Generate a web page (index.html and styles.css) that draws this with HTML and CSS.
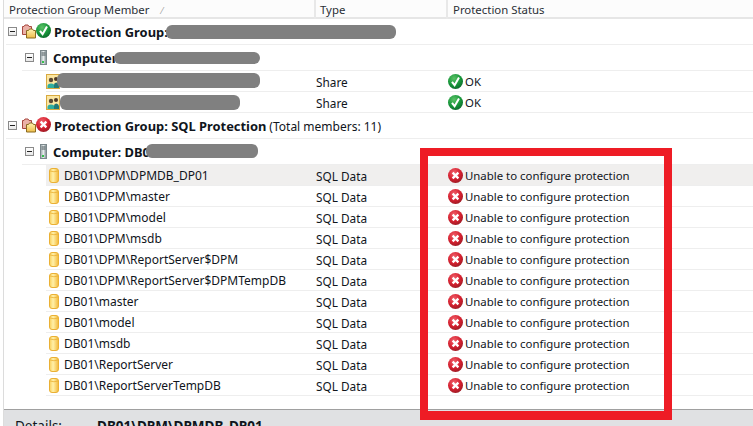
FILE: index.html
```html
<!DOCTYPE html>
<html lang="en">
<head>
<meta charset="utf-8">
<title>Protection Group Members</title>
<link rel="stylesheet" href="styles.css">
</head>
<body>
<svg class="defs" width="0" height="0" aria-hidden="true">
  <defs>
    <radialGradient id="gOk" cx="40%" cy="30%" r="80%"><stop offset="0" stop-color="#5cc267"/><stop offset=".55" stop-color="#17963a"/><stop offset="1" stop-color="#0a5f2a"/></radialGradient>
    <radialGradient id="gErr" cx="40%" cy="30%" r="80%"><stop offset="0" stop-color="#f0606a"/><stop offset=".55" stop-color="#d5202f"/><stop offset="1" stop-color="#8e1a22"/></radialGradient>
    <linearGradient id="gDb" x1="0" x2="1" y1="0" y2="0"><stop offset="0" stop-color="#f9cf5a"/><stop offset=".4" stop-color="#fff0a8"/><stop offset="1" stop-color="#f3b838"/></linearGradient>
    <linearGradient id="gSrv" x1="0" x2="1" y1="0" y2="0"><stop offset="0" stop-color="#9aa6aa"/><stop offset=".5" stop-color="#e6ebec"/><stop offset="1" stop-color="#76858a"/></linearGradient>
    <linearGradient id="gFold" x1="0" x2="0" y1="0" y2="1"><stop offset="0" stop-color="#fff3b4"/><stop offset="1" stop-color="#eebc48"/></linearGradient>
    <symbol id="ok" viewBox="0 0 15 15"><circle cx="7.5" cy="7.5" r="7.5" fill="url(#gOk)"/><path d="M4 7.800 6.600 11.200 11 3.400" fill="none" stroke="#fff" stroke-width="2"/></symbol>
    <symbol id="err" viewBox="0 0 15 15"><circle cx="7.5" cy="7.5" r="7.5" fill="url(#gErr)"/><path d="M4.600 4.600l5.800 5.800M10.400 4.600l-5.800 5.800" fill="none" stroke="#fff" stroke-width="2.300"/></symbol>
    <symbol id="group" viewBox="0 0 14 15"><path d="M.5 2.500h1.500l1-1.500h3l1 1.500h2.500v8h-9z" fill="#eab1a8" stroke="#a8473f"/><path d="M4.500 6.500h2l1-1.500h3l1 1.500h2v7.500h-9z" fill="url(#gFold)" stroke="#8a6a20"/></symbol>
    <symbol id="server" viewBox="0 0 7 15"><rect x=".5" y=".5" width="6" height="14" fill="url(#gSrv)" stroke="#7c888c"/><path d="M1.500 3h4M1.500 5h4" stroke="#4f5b5f"/><rect x="2" y="11" width="2" height="2" fill="#35c04b"/></symbol>
    <symbol id="share" viewBox="0 0 14 15"><rect x=".5" y=".5" width="13" height="14" fill="#fbe6a2" stroke="#d8a93f"/><circle cx="5" cy="6" r="2.200" fill="#5b4a35"/><circle cx="10" cy="5" r="2" fill="#4f3a25"/><path d="M1.500 14v-2q0-2.500 3.500-2.500t3.500 2.500v2z" fill="#2fae9f"/><path d="M8 14v-3q0-2.500 2.200-2.500t2.800 2.500v3z" fill="#227a78"/></symbol>
    <symbol id="db" viewBox="0 0 10 15"><rect x=".5" y=".5" width="9" height="14" rx="2.500" fill="url(#gDb)" stroke="#eab034"/><path d="M1 3q4 1.500 8 0" fill="none" stroke="#eab034" stroke-width=".8"/></symbol>
  </defs>
</svg>

<main class="window">
  <header class="head">
    <div class="head-cell head-member">Protection Group Member<span class="sort">&#8260;</span></div>
    <div class="head-cell head-type">Type</div>
    <div class="head-cell head-status">Protection Status</div>
  </header>

  <section class="tree">
    <div class="row group">
      <span class="expander"></span>
      <svg class="ico-group"><use href="#group"/></svg>
      <svg class="ico-state"><use href="#ok"/></svg>
      <span class="label"><b>Protection Group:</b></span>
      <span class="smudge s1"></span>
    </div>
    <div class="row computer">
      <span class="expander"></span>
      <svg class="ico-server"><use href="#server"/></svg>
      <span class="label"><b>Computer</b></span>
      <span class="smudge s2"></span>
    </div>
    <div class="row member">
      <div class="cell-name"><svg class="ico-share"><use href="#share"/></svg></div>
      <div class="cell-type">Share</div>
      <div class="cell-status"><svg class="ico-small"><use href="#ok"/></svg>OK</div>
      <span class="smudge s3"></span>
    </div>
    <div class="row member">
      <div class="cell-name"><svg class="ico-share"><use href="#share"/></svg></div>
      <div class="cell-type">Share</div>
      <div class="cell-status"><svg class="ico-small"><use href="#ok"/></svg>OK</div>
      <span class="smudge s4"></span>
    </div>

    <div class="row group">
      <span class="expander"></span>
      <svg class="ico-group"><use href="#group"/></svg>
      <svg class="ico-state"><use href="#err"/></svg>
      <span class="label"><b>Protection Group: SQL Protection</b> <span class="count">(Total members: 11)</span></span>
    </div>
    <div class="row computer">
      <span class="expander"></span>
      <svg class="ico-server"><use href="#server"/></svg>
      <span class="label"><b>Computer: DB01</b></span>
      <span class="smudge s5"></span>
    </div>
    <div class="row member selected">
      <div class="cell-name"><svg class="ico-db"><use href="#db"/></svg>DB01\DPM\DPMDB_DP01</div>
      <div class="cell-type">SQL Data</div>
      <div class="cell-status"><svg class="ico-small"><use href="#err"/></svg>Unable to configure protection</div>
    </div>
    <div class="row member">
      <div class="cell-name"><svg class="ico-db"><use href="#db"/></svg>DB01\DPM\master</div>
      <div class="cell-type">SQL Data</div>
      <div class="cell-status"><svg class="ico-small"><use href="#err"/></svg>Unable to configure protection</div>
    </div>
    <div class="row member">
      <div class="cell-name"><svg class="ico-db"><use href="#db"/></svg>DB01\DPM\model</div>
      <div class="cell-type">SQL Data</div>
      <div class="cell-status"><svg class="ico-small"><use href="#err"/></svg>Unable to configure protection</div>
    </div>
    <div class="row member">
      <div class="cell-name"><svg class="ico-db"><use href="#db"/></svg>DB01\DPM\msdb</div>
      <div class="cell-type">SQL Data</div>
      <div class="cell-status"><svg class="ico-small"><use href="#err"/></svg>Unable to configure protection</div>
    </div>
    <div class="row member">
      <div class="cell-name"><svg class="ico-db"><use href="#db"/></svg>DB01\DPM\ReportServer$DPM</div>
      <div class="cell-type">SQL Data</div>
      <div class="cell-status"><svg class="ico-small"><use href="#err"/></svg>Unable to configure protection</div>
    </div>
    <div class="row member">
      <div class="cell-name"><svg class="ico-db"><use href="#db"/></svg>DB01\DPM\ReportServer$DPMTempDB</div>
      <div class="cell-type">SQL Data</div>
      <div class="cell-status"><svg class="ico-small"><use href="#err"/></svg>Unable to configure protection</div>
    </div>
    <div class="row member">
      <div class="cell-name"><svg class="ico-db"><use href="#db"/></svg>DB01\master</div>
      <div class="cell-type">SQL Data</div>
      <div class="cell-status"><svg class="ico-small"><use href="#err"/></svg>Unable to configure protection</div>
    </div>
    <div class="row member">
      <div class="cell-name"><svg class="ico-db"><use href="#db"/></svg>DB01\model</div>
      <div class="cell-type">SQL Data</div>
      <div class="cell-status"><svg class="ico-small"><use href="#err"/></svg>Unable to configure protection</div>
    </div>
    <div class="row member">
      <div class="cell-name"><svg class="ico-db"><use href="#db"/></svg>DB01\msdb</div>
      <div class="cell-type">SQL Data</div>
      <div class="cell-status"><svg class="ico-small"><use href="#err"/></svg>Unable to configure protection</div>
    </div>
    <div class="row member">
      <div class="cell-name"><svg class="ico-db"><use href="#db"/></svg>DB01\ReportServer</div>
      <div class="cell-type">SQL Data</div>
      <div class="cell-status"><svg class="ico-small"><use href="#err"/></svg>Unable to configure protection</div>
    </div>
    <div class="row member">
      <div class="cell-name"><svg class="ico-db"><use href="#db"/></svg>DB01\ReportServerTempDB</div>
      <div class="cell-type">SQL Data</div>
      <div class="cell-status"><svg class="ico-small"><use href="#err"/></svg>Unable to configure protection</div>
    </div>
  </section>

  <footer class="details">
    <span class="details-key">Details:</span>
    <b class="details-value">DB01\DPM\DPMDB_DP01</b>
  </footer>

  <div class="callout"></div>
</main>
</body>
</html>
```
FILE: styles.css
```css
* { box-sizing: border-box; }
html, body { margin: 0; height: 100%; overflow: hidden; background: #fff; }
.defs { position: absolute; }
.window {
  position: relative;
  height: 426px;
  display: flex;
  flex-direction: column;
  overflow: hidden;
  font: 11.4px/16px "Noto Sans", sans-serif;
  color: #10151c;
  border-left: 3px solid #fff;
}
.window::before {
  content: "";
  position: absolute;
  left: 0; top: 0; bottom: 0;
  width: 1px;
  background: #dcdcdc;
}

.head {
  flex: none;
  height: 19px;
  display: grid;
  grid-template-columns: 311px 132px 1fr;
  background: #fcfcfc;
  border-bottom: 2px solid #e6e6e6;
  color: #2a2f36;
}
.head-cell { padding: 2px 0 0 6px; white-space: nowrap; }
.head-type, .head-status { border-left: 2px solid #e8e8e8; }
.head-type { padding-left: 4px; }
.head-status { padding-left: 5px; }
.sort { margin-left: 12px; color: #9a9a9a; font-size: 9px; }

.tree { flex: none; height: 390px; }
.row { position: relative; display: flex; align-items: center; border-bottom: 1px solid #eeeeee; }
.group { height: 26px; margin-left: 3px; padding-left: 2px; }
.computer { height: 26px; margin-left: 19px; }
.group b, .computer b { font-size: 12.9px; }
.count { font-size: 12px; }
.member {
  height: 21px;
  margin-left: 43px;
  display: grid;
  grid-template-columns: 270px 132px 1fr;
}
.selected { background: #f0efee; }

.expander {
  width: 9px; height: 9px;
  flex: none;
  border: 1px solid #8a8a8a;
  background: linear-gradient(#fff, #e8e8e8);
  position: relative;
}
.expander::after {
  content: "";
  position: absolute;
  left: 1px; right: 1px; top: 3px;
  height: 1px;
  background: #222;
}
.computer .expander { margin-left: 3px; }
.ico-group { width: 14px; height: 15px; margin-left: 5px; flex: none; }
.ico-state { width: 15px; height: 15px; flex: none; margin: -2px 0 0 0; }
.ico-server { width: 7px; height: 15px; margin-left: 6px; flex: none; }
.label { margin-left: 3px; white-space: nowrap; padding-top: 1px; }
.computer .label { margin-left: 6px; }
.ico-share { width: 14px; height: 15px; display: block; }
.ico-db { width: 10px; height: 15px; margin: 0 5px 0 3px; flex: none; }
.ico-small { width: 15px; height: 15px; margin-right: 2px; flex: none; }
.cell-name, .cell-type, .cell-status { display: flex; align-items: center; white-space: nowrap; line-height: 18px; padding-top: 1px; }
.cell-name { font-size: 12px; }
.cell-type { font-size: 11.8px; }

.smudge { position: absolute; background: #808080; border-radius: 6px; }
.s1 { left: 160px; top: 6px; width: 230px; height: 14px; }
.s2 { left: 92px; top: 7px; width: 146px; height: 12px; }
.s3 { left: 11px; top: 2px; width: 203px; height: 15px; }
.s4 { left: 14px; top: 3px; width: 180px; height: 15px; }
.s5 { left: 124px; top: 5px; width: 112px; height: 14px; }

.details {
  flex: 1;
  background: #e0e1e3;
  border-top: 1px solid #a0a0a0;
  padding: 8px 0 0 12px;
  display: flex;
  white-space: nowrap;
  font-size: 13.5px;
}
.details-key { width: 82px; }

.callout {
  position: absolute;
  left: 417px; top: 148px;
  width: 252px; height: 272px;
  border: 8px solid #ee1c25;
  border-bottom-width: 9px;
}
```
